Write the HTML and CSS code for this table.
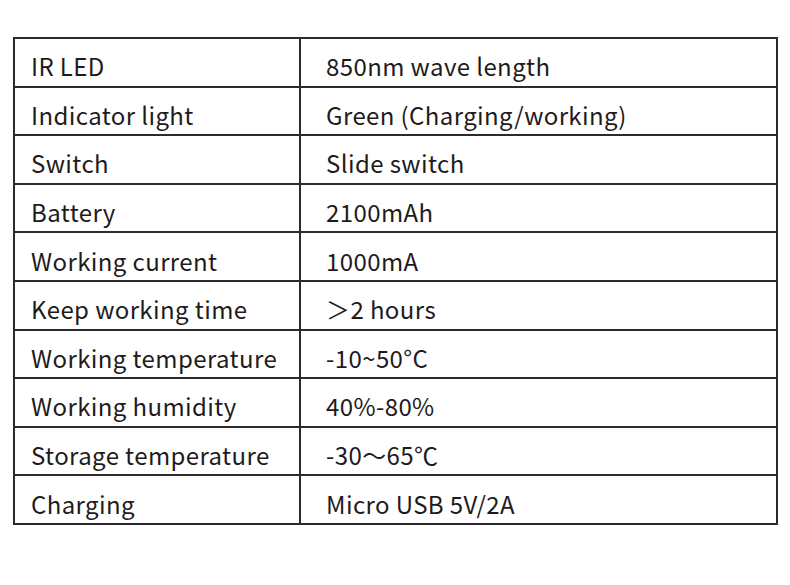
FILE: index.html
```html
<!DOCTYPE html>
<html>
<head>
<meta charset="utf-8">
<link rel="stylesheet" href="styles.css">
</head>
<body>
<table class="spec">
<tbody>
<tr><td class="k">IR LED</td><td class="v">850nm wave length</td></tr>
<tr><td class="k">Indicator light</td><td class="v">Green (Charging/working)</td></tr>
<tr><td class="k">Switch</td><td class="v">Slide switch</td></tr>
<tr><td class="k">Battery</td><td class="v">2100mAh</td></tr>
<tr><td class="k">Working current</td><td class="v">1000mA</td></tr>
<tr><td class="k">Keep working time</td><td class="v">＞2 hours</td></tr>
<tr><td class="k">Working temperature</td><td class="v">-10~50°C</td></tr>
<tr><td class="k">Working humidity</td><td class="v">40%-80%</td></tr>
<tr><td class="k">Storage temperature</td><td class="v">-30～65℃</td></tr>
<tr><td class="k">Charging</td><td class="v">Micro USB 5V/2A</td></tr>
</tbody>
</table>
</body>
</html>
```
FILE: styles.css
```css
html, body {
  margin: 0;
  padding: 0;
  background: #ffffff;
}
body {
  padding: 37px 0 0 13px;
  font-family: "Noto Sans CJK SC", "Noto Sans", sans-serif;
  color: #1f1b1c;
}
.spec {
  border-collapse: collapse;
  width: 765px;
  border: 2px solid #231f20;
  table-layout: fixed;
}
.spec td {
  border: 2px solid #2e2a2b;
  height: 38.6px;
  padding: 8px 0 0 0;
  font-size: 24px;
  letter-spacing: 0.4px;
  line-height: 1;
  vertical-align: middle;
  white-space: nowrap;
}
.spec td.k {
  width: 268px;
  padding-left: 16px;
}
.spec td.v {
  padding-left: 25px;
}
```
